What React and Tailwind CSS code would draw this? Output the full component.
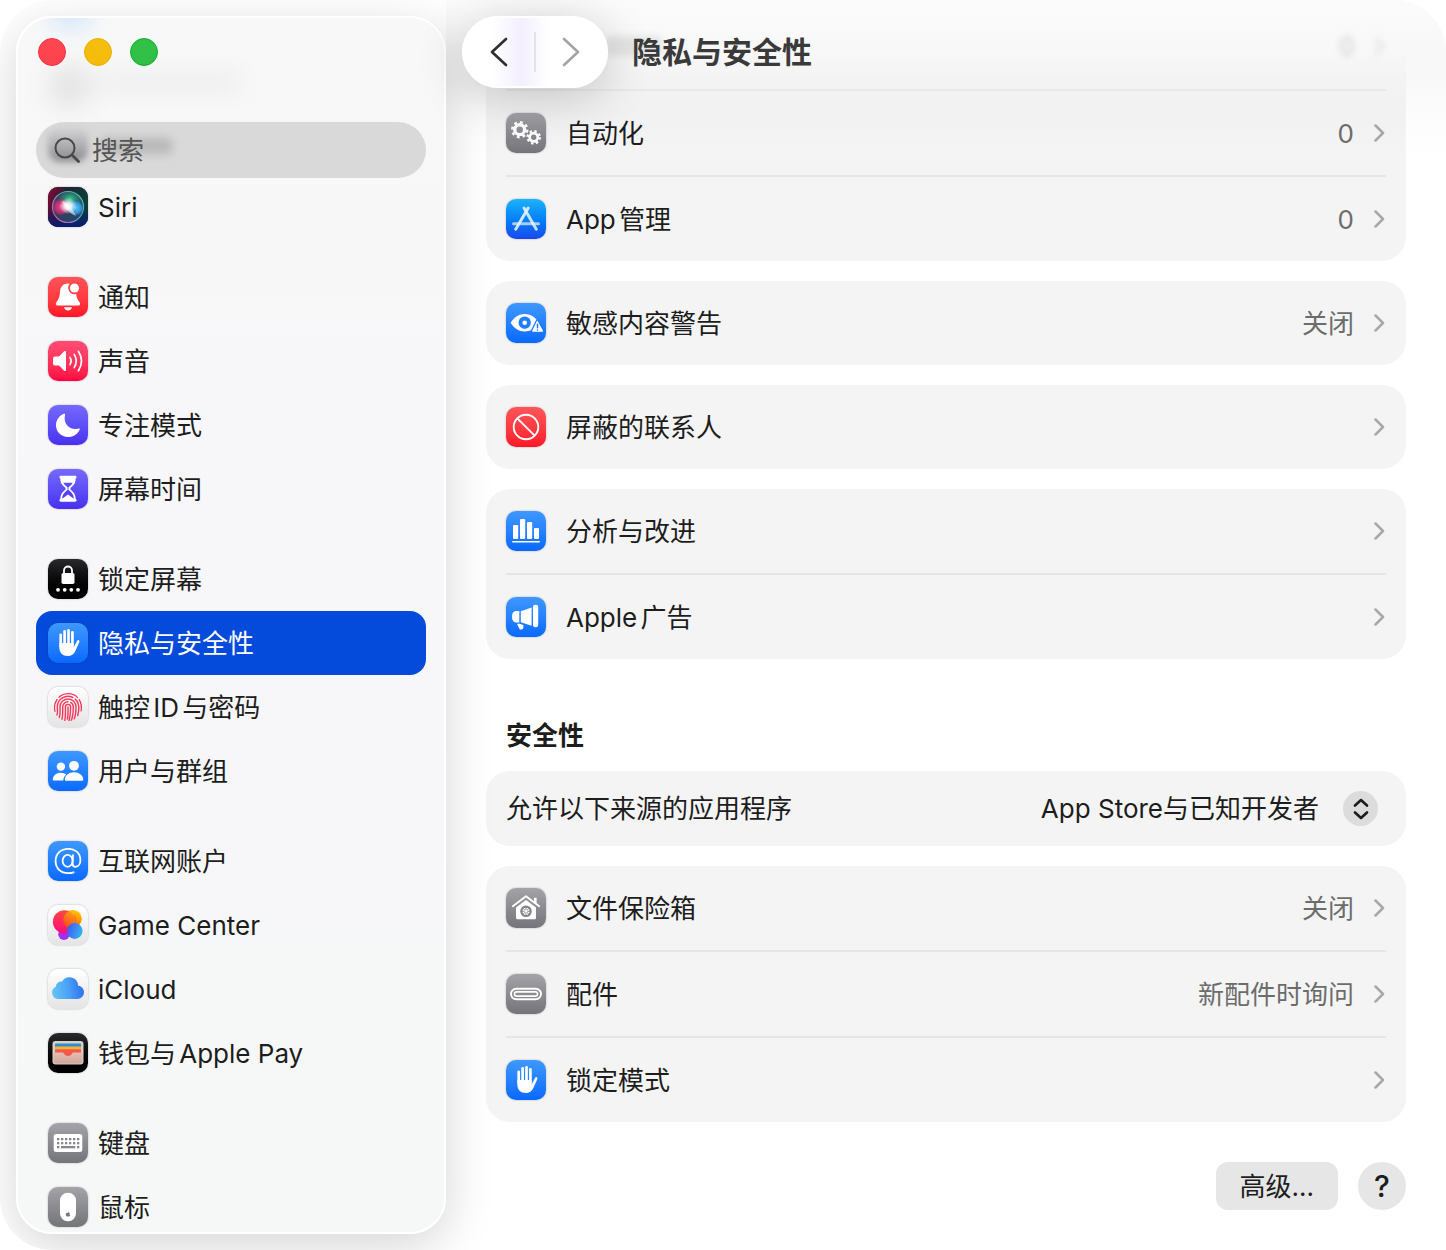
import React, { useState } from "react";
import { FaApple } from "react-icons/fa";

const tileColors = {
  gray: "bg-linear-to-b from-[#a4a3a8] to-[#75747a]",
  red: "bg-linear-to-b from-[#ff5459] to-[#ff1226]",
  pink: "bg-linear-to-b from-[#ff4c74] to-[#ff0043]",
  indigo: "bg-linear-to-b from-[#7668ff] to-[#492eee]",
  blue: "bg-linear-to-b from-[#3e98ff] to-[#0869ff]",
  sky: "bg-linear-to-b from-[#1fb2fc] to-[#1a46ee]",
  black: "bg-linear-to-b from-[#2a2a2c] to-[#000000]",
  white: "bg-linear-to-b from-[#ffffff] to-[#e4e4e4]",
};

function Tile({ color, children }) {
  return (
    <span
      className={`block size-10 shrink-0 overflow-hidden rounded-[10px] shadow-[0_0_2px_rgba(0,0,0,0.3)] ${tileColors[color]}`}
    >
      <svg viewBox="0 0 40 40" className="size-10" fill="#fff" aria-hidden="true">
        {children}
      </svg>
    </span>
  );
}

const SiriIcon = () => (
  <Tile color="black">
    <defs>
      <linearGradient id="siriBg" x1="0" y1="0" x2="1" y2="0.3">
        <stop offset="0" stopColor="#8a0638" />
        <stop offset="0.45" stopColor="#26202f" />
        <stop offset="1" stopColor="#0a4038" />
      </linearGradient>
      <linearGradient id="siriShade" x1="0" y1="0" x2="0" y2="1">
        <stop offset="0.5" stopColor="#0b1a66" stopOpacity="0" />
        <stop offset="1" stopColor="#0b1a7a" />
      </linearGradient>
      <radialGradient id="siriGlow">
        <stop offset="0" stopColor="#fff" />
        <stop offset="0.4" stopColor="#fff" stopOpacity="0.85" />
        <stop offset="1" stopColor="#fff" stopOpacity="0" />
      </radialGradient>
      <radialGradient id="siriPink">
        <stop offset="0" stopColor="#f2408c" />
        <stop offset="0.7" stopColor="#e02e78" stopOpacity="0.7" />
        <stop offset="1" stopColor="#d01e62" stopOpacity="0.2" />
      </radialGradient>
      <radialGradient id="siriBlue">
        <stop offset="0" stopColor="#4cc8ff" />
        <stop offset="0.7" stopColor="#3aa2ee" stopOpacity="0.8" />
        <stop offset="1" stopColor="#2b7fe0" stopOpacity="0.2" />
      </radialGradient>
      <radialGradient id="siriGreen">
        <stop offset="0" stopColor="#3ad0a0" />
        <stop offset="1" stopColor="#1b8a70" stopOpacity="0.3" />
      </radialGradient>
      <linearGradient id="siriRing" x1="0" y1="1" x2="1" y2="0">
        <stop offset="0" stopColor="#f04a8c" />
        <stop offset="0.5" stopColor="#5c9ad0" />
        <stop offset="1" stopColor="#3cc9a0" />
      </linearGradient>
    </defs>
    <rect width="40" height="40" fill="url(#siriBg)" />
    <rect width="40" height="40" fill="url(#siriShade)" />
    <circle cx="20" cy="20" r="15" fill="#3a5a70" opacity="0.6" />
    <ellipse cx="22" cy="12" rx="11" ry="8" fill="url(#siriGreen)" />
    <circle cx="13" cy="20" r="8.5" fill="url(#siriPink)" />
    <circle cx="28" cy="21" r="7.5" fill="url(#siriBlue)" />
    <ellipse cx="20" cy="19" rx="9" ry="8" fill="url(#siriGlow)" />
    <path d="M14 14c5 2 10 6 14 15-7-3-11-8-14-15z" fill="#fff" opacity="0.5" />
    <circle cx="20" cy="20" r="15.5" fill="none" stroke="url(#siriRing)" strokeWidth="1.2" />
  </Tile>
);

const BellIcon = () => (
  <Tile color="red">
    <path d="M20 6.500c-5 0-7.700 3.500-8 8.500-.3 5-1.200 7-3.500 10-1.200 1.500-.8 3.500 1.200 3.500h20.600c2 0 2.400-2 1.200-3.500-2.300-3-3.200-5-3.500-10-.3-5-3-8.500-8-8.500z" />
    <path d="M16 30.300h8c-.3 2-2 3.100-4 3.100s-3.700-1.100-4-3.100z" />
    <circle cx="26.500" cy="11" r="6.300" fill="#ff4248" />
    <circle cx="26.500" cy="11" r="4.600" />
  </Tile>
);

const SoundIcon = () => (
  <Tile color="pink">
    <path d="M5 17.500a2 2 0 0 1 2-2h4l5.200-5.200c.8-.8 1.800-.4 1.800.8v17.800c0 1.200-1 1.600-1.800.8L11 24.500H7a2 2 0 0 1-2-2z" />
    <g fill="none" stroke="#fff" strokeWidth="1.700" strokeLinecap="round">
      <path d="M22 16.500q2.200 3.500 0 7" />
      <path d="M26.200 13.400q4 6.600 0 13.200" />
      <path d="M30.400 10.300q6.200 9.700 0 19.400" />
    </g>
  </Tile>
);

const MoonIcon = () => (
  <Tile color="indigo">
    <path d="M16 8.800C11.200 10.700 8 15 8 20.300 8 27 13.300 32 20 32c5.300 0 9.700-2.900 11.700-7.300.3-.8-.2-1.300-1-1.100-8.500 2-15.800-4-13.700-13.800.2-.9-.3-1.300-1-1z" />
  </Tile>
);

const HourglassIcon = () => (
  <Tile color="indigo">
    <path d="M13 6.800h14c2 0 2 2.400.6 2.700.2 4.700-2 7-5.100 9.300v1.900c3.100 2.300 5.300 4.600 5.100 9.300 1.400.3 1.400 2.700-.6 2.700H13c-2 0-2-2.400-.6-2.700-.2-4.700 2-7 5.100-9.300v-1.900c-3.100-2.300-5.300-4.600-5.100-9.300C11 9.200 11 6.800 13 6.800z" />
    <path d="M15.300 13.700h9.400c-.8 1.900-2.500 3.100-4.200 4.500v2.600h-1v-2.600c-1.700-1.400-3.400-2.600-4.200-4.500z" fill="#5f4bf6" />
    <path d="M14.200 29.700c-.1-3.900 2.300-6.300 5.300-8.600h1c3 2.300 5.400 4.700 5.300 8.600L20 25.500z" fill="#5540f3" />
  </Tile>
);

const LockIcon = () => (
  <Tile color="black">
    <path d="M16 15v-3.500a4 4 0 0 1 8 0V15" fill="none" stroke="#fff" strokeWidth="1.800" />
    <rect x="13.500" y="14" width="13" height="11" rx="1.800" />
    {[10, 16.7, 23.3, 30].map((cx) => (
      <circle key={cx} cx={cx} cy="30.800" r="1.900" />
    ))}
  </Tile>
);

const HandIcon = () => (
  <Tile color="blue">
    <g stroke="#fff" strokeWidth="2.700" strokeLinecap="round">
      <path d="M12.700 11.800V23" />
      <path d="M16.600 8.300V22" />
      <path d="M20.500 7.300V22" />
      <path d="M24.400 9.300V22" />
    </g>
    <path d="M11.350 20h14.400v4.200l2.900-5.500c.6-1.200 1.300-1.900 2.200-1.500.9.400.7 1.400.3 2.300l-3.800 8.500c-1.600 3.300-4 5-7.500 5-5.200 0-8.500-3.200-8.500-8.500z" />
  </Tile>
);

const TouchIdIcon = () => (
  <Tile color="white">
    <clipPath id="touchId">
      <circle cx="20" cy="20" r="14.300" />
    </clipPath>
    <g clipPath="url(#touchId)" fill="none" stroke="#f8375b" strokeWidth="1.400" strokeLinecap="round">
      <path d="M6.900 24.500c-1.100-5-.1-9 2.100-12" />
      <path d="M11 10.200c5.500-5 14-4.500 18.600.300" />
      <path d="M31.300 12.700c2 3.300 2.500 6.800 1.900 11.300" />
      <path d="M8.700 28.500c1.500-3 .6-5.500.6-8.500a10.700 10.700 0 0 1 15.500-9.500" />
      <path d="M27.200 12.100c3.600 3 4 6.500 3.500 11.400l-1 5" />
      <path d="M10.800 31.500c1.700-3.500 1.300-7.500 1.200-11.500a8 8 0 0 1 16 0c0 4-.2 8-1.800 12" />
      <path d="M13.500 33.500c1.600-4 1.200-9 1.200-13.500 0-3 2.300-5.300 5.300-5.300" />
      <path d="M22.500 15.400c2 1 2.800 2.700 2.800 4.600 0 5-.3 9-2 13.500" />
      <path d="M16.600 34c1.200-4 .8-9.500.8-14a2.600 2.600 0 0 1 5.200 0c0 5-.2 9-1.600 14" />
      <path d="M20 20v6.500c0 2-.2 3.500-.6 5.500" />
    </g>
  </Tile>
);

const UsersIcon = () => (
  <Tile color="blue">
    <circle cx="12.900" cy="15.600" r="4.200" />
    <circle cx="26" cy="14.800" r="4.900" />
    <path d="M12.900 21.800c2.200 0 4 .7 5.300 1.800-1.800 1.600-2.900 3.600-2.900 6H6c-1 0-1.400-.5-1.300-1.300.4-3.800 3.700-6.500 8.200-6.500z" />
    <path d="M26 21.300c5.200 0 8.700 3 9.300 6.900.1.900-.4 1.500-1.300 1.500H18c-.9 0-1.400-.6-1.300-1.500.6-3.900 4.100-6.900 9.300-6.900z" />
  </Tile>
);

const InternetIcon = () => (
  <Tile color="blue">
    <g fill="none" stroke="#fff" strokeWidth="1.800" strokeLinecap="round" strokeLinejoin="round">
      <ellipse cx="19.600" cy="19.800" rx="5" ry="6" />
      <path d="M25 14.200l-.4 8.300c0 2.200 1 3.300 2.900 3.300 2.900 0 4.900-3 4.900-6.800 0-6.600-5-11.200-12.200-11.200-7.400 0-12.600 5-12.600 12.300s5 12.100 12.700 12.100c2 0 3.900-.3 5.300-.9" />
    </g>
  </Tile>
);

const GameCenterIcon = () => (
  <Tile color="white">
    <defs>
      <linearGradient id="gcRed" x1="0.5" y1="0" x2="0.4" y2="1">
        <stop offset="0" stopColor="#ff4a3d" />
        <stop offset="1" stopColor="#ff0a7c" />
      </linearGradient>
      <linearGradient id="gcYellow" x1="0.7" y1="0" x2="0.2" y2="1">
        <stop offset="0" stopColor="#ffc800" />
        <stop offset="1" stopColor="#ff4a00" />
      </linearGradient>
      <linearGradient id="gcBlue" x1="0" y1="0.3" x2="1" y2="0.6">
        <stop offset="0" stopColor="#4655f0" />
        <stop offset="1" stopColor="#2fb8f5" />
      </linearGradient>
    </defs>
    <circle cx="16" cy="29.300" r="5.700" fill="#a32df0" />
    <circle cx="25" cy="13.800" r="8.800" fill="url(#gcYellow)" />
    <circle cx="16.500" cy="16.800" r="11.600" fill="url(#gcRed)" />
    <path d="M26.300 11.200a11.600 11.600 0 0 1-1.600 13.800 8.800 8.800 0 0 1 1.300-19.900" fill="url(#gcYellow)" opacity="0.700" />
    <circle cx="26.700" cy="26" r="7.900" fill="url(#gcBlue)" />
  </Tile>
);

const CloudIcon = () => (
  <Tile color="white">
    <defs>
      <linearGradient id="cloud" x1="0" y1="0.6" x2="1" y2="0.5">
        <stop offset="0" stopColor="#63c6f3" />
        <stop offset="0.5" stopColor="#4aa2f5" />
        <stop offset="1" stopColor="#2d6fee" />
      </linearGradient>
    </defs>
    <path
      d="M10.500 30A6.400 6.400 0 0 1 7.800 17.800 5.600 5.600 0 0 1 14 12.500 8.600 8.600 0 0 1 30 16.500a6.800 6.800 0 0 1 0 13.500z"
      fill="url(#cloud)"
    />
  </Tile>
);

const WalletIcon = () => (
  <Tile color="black">
    <defs>
      <linearGradient id="walletFront" x1="0" y1="0" x2="0" y2="1">
        <stop offset="0" stopColor="#e6bdb2" />
        <stop offset="1" stopColor="#cfa79b" />
      </linearGradient>
    </defs>
    <rect x="4.500" y="8" width="31" height="23.500" rx="3" fill="#d8cfc8" />
    <rect x="7" y="10.500" width="26" height="5" rx="1" fill="#2c8fd6" />
    <rect x="7" y="13.500" width="26" height="5" rx="1" fill="#f8b42e" />
    <rect x="7" y="16.300" width="26" height="9" rx="1" fill="#f4574b" />
    <path
      d="M5.500 19.500h9c1.500 0 1.800 3.500 5.500 3.500s4-3.500 5.500-3.500h9V28a2.500 2.500 0 0 1-2.500 2.500H8A2.500 2.500 0 0 1 5.500 28z"
      fill="url(#walletFront)"
    />
  </Tile>
);

const KeyboardIcon = () => (
  <Tile color="gray">
    <rect x="5.700" y="11" width="28.600" height="18" rx="2.500" />
    <g fill="#87868c">
      {[15, 19].map((y) =>
        [9, 13, 17, 21, 25, 29].map((x) => (
          <rect key={`${x}-${y}`} x={x} y={y} width="2.300" height="2.300" />
        ))
      )}
      <rect x="9" y="23" width="2.300" height="2.300" />
      <rect x="13" y="23" width="14.300" height="2.300" />
      <rect x="29" y="23" width="2.300" height="2.300" />
    </g>
  </Tile>
);

const MouseIcon = () => (
  <Tile color="gray">
    <rect x="12" y="5.700" width="16" height="28.600" rx="7.800" />
    <FaApple x="17" y="24" size={6} color="#77767c" />
  </Tile>
);

const GearsIcon = () => (
  <Tile color="gray">
    <g fill="none" stroke="#fff">
      <circle cx="13.700" cy="16.700" r="4.900" strokeWidth="3.400" />
      <circle cx="13.700" cy="16.700" r="7.300" strokeWidth="2.800" strokeDasharray="2.800 2.933" />
      <circle cx="27.700" cy="24.300" r="4.100" strokeWidth="2.800" />
      <circle cx="27.700" cy="24.300" r="6.100" strokeWidth="2.400" strokeDasharray="2.300 2.490" />
    </g>
  </Tile>
);

const AppStoreIcon = () => (
  <Tile color="sky">
    <g fill="none" stroke="#e4f3ff" strokeWidth="3" strokeLinecap="round">
      <path d="M7.500 24.700h25" opacity="0.700" />
      <path d="M18 9l12.300 21.300" opacity="0.850" />
      <path d="M22.200 9L9.700 30.300" opacity="0.900" />
    </g>
  </Tile>
);

const SensitiveIcon = () => (
  <Tile color="blue">
    <path d="M4.700 19.700C8 14 13 11 18.700 11s10.700 3 14 8.700c-3.300 5.700-8.300 8.700-14 8.700S8 25.400 4.700 19.700z" />
    <circle cx="18.700" cy="19.700" r="6.200" fill="#1f7fff" />
    <circle cx="18.700" cy="19.700" r="2.300" />
    <path
      d="M31.800 18.200l5 9c.5.900 0 1.600-.9 1.600h-8.600c-.9 0-1.400-.7-.9-1.600l4.400-9c.3-.6.700-.6 1 0z"
      stroke="#1a7aff"
      strokeWidth="2.600"
      strokeLinejoin="round"
      paintOrder="stroke"
    />
    <path d="M31.500 21.300v3.600" stroke="#1675ff" strokeWidth="1.400" strokeLinecap="round" />
    <circle cx="31.500" cy="27" r="0.800" fill="#1675ff" />
  </Tile>
);

const BlockedIcon = () => (
  <Tile color="red">
    <g fill="none" stroke="#fff" strokeWidth="1.900">
      <circle cx="20" cy="20" r="12.300" />
      <path d="M11.300 11.300l17.400 17.400" />
    </g>
  </Tile>
);

const ChartIcon = () => (
  <Tile color="blue">
    <rect x="7" y="14" width="5.200" height="14" rx="1" />
    <rect x="14" y="8" width="5.200" height="20" rx="1" />
    <rect x="21" y="11" width="5.200" height="17" rx="1" />
    <rect x="28" y="17" width="5" height="11" rx="1" />
    <rect x="6" y="30" width="28" height="1.600" rx="0.800" />
  </Tile>
);

const MegaphoneIcon = () => (
  <Tile color="blue">
    <rect x="27" y="7.700" width="5.200" height="22.600" rx="2.200" />
    <path d="M14.800 14.300l10.800-3.800v18.200l-10.800-3.500z" />
    <path d="M13.300 14v11.500H10c-2.500 0-4-2.300-4-5.700S7.500 14 10 14z" />
    <path d="M11 26.700h2.500l3.900 1.200v2.700c0 1.300-.9 2-2.200 2s-1.700-.6-2.200-1.600z" />
  </Tile>
);

const VaultIcon = () => (
  <Tile color="gray">
    <path d="M6.800 18.200L20 8.200l13.200 10" fill="none" stroke="#fff" strokeWidth="1.900" strokeLinecap="round" strokeLinejoin="round" />
    <path d="M28 9.800h2.600v6.400L28 14.200z" />
    <path d="M20 12l10 7.600v9.900c0 1.200-.6 1.800-1.800 1.800H11.800c-1.200 0-1.800-.6-1.800-1.800v-9.900z" />
    <g fill="none" stroke="#828187">
      <circle cx="20" cy="23.300" r="4.700" strokeWidth="2.200" />
      <path d="M20 18.500v9.600M15.200 23.300h9.600M16.600 19.900l6.800 6.800M23.400 19.900l-6.800 6.800" strokeWidth="0.900" />
    </g>
    <circle cx="20" cy="23.300" r="1.300" />
  </Tile>
);

const AccessoryIcon = () => (
  <Tile color="gray">
    <g fill="none" stroke="#fff" strokeWidth="1.900">
      <rect x="5" y="14.700" width="30" height="10.600" rx="5.300" />
      <rect x="8.500" y="17.900" width="23" height="4.200" rx="2.100" strokeWidth="1.700" />
    </g>
  </Tile>
);

const sidebarGroups = [
  [{ label: "Siri", Icon: SiriIcon }],
  [
    { label: "通知", Icon: BellIcon },
    { label: "声音", Icon: SoundIcon },
    { label: "专注模式", Icon: MoonIcon },
    { label: "屏幕时间", Icon: HourglassIcon },
  ],
  [
    { label: "锁定屏幕", Icon: LockIcon },
    { label: "隐私与安全性", Icon: HandIcon },
    { label: "触控ID与密码", Icon: TouchIdIcon },
    { label: "用户与群组", Icon: UsersIcon },
  ],
  [
    { label: "互联网账户", Icon: InternetIcon },
    { label: "Game Center", Icon: GameCenterIcon },
    { label: "iCloud", Icon: CloudIcon },
    { label: "钱包与Apple Pay", Icon: WalletIcon },
  ],
  [
    { label: "键盘", Icon: KeyboardIcon },
    { label: "鼠标", Icon: MouseIcon },
  ],
];

const appRows = [
  { label: "自动化", value: "0", Icon: GearsIcon },
  { label: "App管理", value: "0", Icon: AppStoreIcon },
];

const privacyGroups = [
  [{ label: "敏感内容警告", value: "关闭", Icon: SensitiveIcon }],
  [{ label: "屏蔽的联系人", Icon: BlockedIcon }],
  [
    { label: "分析与改进", Icon: ChartIcon },
    { label: "Apple广告", Icon: MegaphoneIcon },
  ],
];

const securityRows = [
  { label: "文件保险箱", value: "关闭", Icon: VaultIcon },
  { label: "配件", value: "新配件时询问", Icon: AccessoryIcon },
  { label: "锁定模式", Icon: HandIcon },
];

function Chevron() {
  return (
    <svg viewBox="0 0 12 20" className="h-5 w-3 shrink-0" aria-hidden="true">
      <path d="M1.500 2.500L9 10l-7.500 7.500" fill="none" stroke="#a8a8a8" strokeWidth="2.500" strokeLinecap="round" strokeLinejoin="round" />
    </svg>
  );
}

function Row({ label, value, Icon }) {
  return (
    <button type="button" className="flex h-[84px] w-full items-center gap-5 text-left">
      <Icon />
      <span className="flex-1 pt-0.5">{label}</span>
      {value && <span className="pt-0.5 text-[#6c6c6c]">{value}</span>}
      <Chevron />
    </button>
  );
}

function Rows({ rows }) {
  return (
    <ul className="divide-y-2 divide-[#e5e5e5]">
      {rows.map((row) => (
        <li key={row.label}>
          <Row {...row} />
        </li>
      ))}
    </ul>
  );
}

function Card({ rows }) {
  return (
    <div className="rounded-3xl bg-[#f4f4f4] px-5">
      <Rows rows={rows} />
    </div>
  );
}

function Sidebar({ selected, onSelect }) {
  return (
    <aside className="relative z-20 m-4 flex w-[430px] shrink-0 flex-col overflow-hidden rounded-[36px] border-2 border-white bg-linear-to-b from-[#f8f8f8] via-[#f7f6f9] to-[#f6f8f7] shadow-[0_12px_48px_rgba(0,0,0,0.17)]">
      {/* Lo que ya pasó por debajo de la cabecera */}
      <div className="absolute top-12 left-8 h-10 w-10 rounded-xl bg-black/8 blur-md" />
      <div className="absolute top-14 left-20 h-4 w-36 rounded-xl bg-black/5 blur-md" />
      <div className="absolute -top-6 left-8 h-8 w-10 rounded-xl bg-blue-300/40 blur-md" />

      <header className="flex flex-col px-[18px]">
        <div className="flex gap-[18px] px-0.5 pt-5">
          <button type="button" aria-label="关闭窗口" className="size-7 rounded-full border border-[#f5303c] bg-[#ff454f]" />
          <button type="button" aria-label="最小化" className="size-7 rounded-full border border-[#edb000] bg-[#f6be0c]" />
          <button type="button" aria-label="缩放" className="size-7 rounded-full border border-[#16ad30] bg-[#31c048]" />
        </div>
        <div className="relative mt-14 flex h-14 items-center gap-3 overflow-hidden rounded-full bg-[#d9d9d9] pl-[18px]">
          <div className="absolute top-1 left-3 h-9 w-10 rounded-xl bg-linear-to-b from-transparent to-[#8a898f] blur-[3px]" />
          <div className="absolute top-4 left-16 h-4 w-[72px] rounded bg-black/15 blur-[5px]" />
          <svg viewBox="0 0 26 26" className="relative size-[26px] shrink-0" fill="none" stroke="#484848" aria-hidden="true">
            <circle cx="11" cy="11" r="9.500" strokeWidth="2" />
            <path d="M18 18l6.500 6.500" strokeWidth="2.800" strokeLinecap="round" />
          </svg>
          <input
            type="search"
            aria-label="搜索"
            placeholder="搜索"
            className="relative w-full min-w-0 bg-transparent pt-0.5 outline-none placeholder:text-[#555555]"
          />
        </div>
      </header>

      <nav className="-mt-[3px] flex min-h-0 flex-1 flex-col gap-[26px] overflow-y-auto px-[18px] [scrollbar-width:none]">
        {sidebarGroups.map((group) => (
          <ul key={group[0].label}>
            {group.map(({ label, Icon }) => (
              <li key={label}>
                <a
                  href="#"
                  onClick={() => onSelect(label)}
                  className={`flex h-16 items-center gap-2.5 rounded-2xl px-3 ${
                    selected === label ? "bg-[#054bdb] text-white" : ""
                  }`}
                >
                  <Icon />
                  <span className="pt-0.5">{label}</span>
                </a>
              </li>
            ))}
          </ul>
        ))}
      </nav>
    </aside>
  );
}

export default function App() {
  const [selected, setSelected] = useState("隐私与安全性");
  const [source, setSource] = useState("known");

  return (
    <div className="flex h-screen overflow-hidden rounded-[52px] bg-white font-['Inter','Noto_Sans_CJK_SC',sans-serif] text-[26px] leading-8 text-[#1d1d1d] [text-autospace:normal]">
      <Sidebar selected={selected} onSelect={setSelected} />

      <div className="relative min-w-0 flex-1">
        {/* Barra superior */}
        <header className="absolute inset-x-0 top-0 z-30 flex items-center gap-6 pt-4">
          <div className="flex h-[72px] w-[146px] items-center justify-between rounded-full border-2 border-white bg-linear-to-r from-white from-20% via-[#f3effe] via-40% to-white to-60% px-[26px] shadow-[0_8px_48px_rgba(0,0,0,0.2)]">
            <button type="button" aria-label="返回">
              <svg viewBox="0 0 18 30" className="h-[30px] w-[18px]" fill="none" stroke="#303030" strokeWidth="2.700" strokeLinecap="round" strokeLinejoin="round" aria-hidden="true">
                <path d="M16 2L2 15l14 13" />
              </svg>
            </button>
            <span className="h-10 w-0.5 bg-[#e4e2ea]" />
            <button type="button" aria-label="前进">
              <svg viewBox="0 0 18 30" className="h-[30px] w-[18px]" fill="none" stroke="#a5a5a5" strokeWidth="2.700" strokeLinecap="round" strokeLinejoin="round" aria-hidden="true">
                <path d="M2 2l14 13L2 28" />
              </svg>
            </button>
          </div>
          <h1 className="text-[30px] leading-10 font-bold text-[#3a3a3a]">隐私与安全性</h1>
        </header>
        <div className="pointer-events-none absolute -left-4 right-0 top-0 z-10 h-28 bg-linear-to-b from-[#fbfbfb] from-45% to-transparent to-100%" />
        <div className="pointer-events-none absolute -left-4 right-0 top-0 z-10 h-40 bg-linear-to-b from-transparent via-black/2 to-transparent" />

        <main className="h-full overflow-y-auto px-10 pb-10 pl-6 [scrollbar-width:none]">
          <div className="rounded-b-3xl bg-[#f4f4f4] px-5 pt-[89px]">
            <div className="border-t-2 border-[#e5e5e5]">
              <Rows rows={appRows} />
            </div>
          </div>

          <div className="mt-5 flex flex-col gap-5">
            {privacyGroups.map((rows) => (
              <Card key={rows[0].label} rows={rows} />
            ))}
          </div>

          <h2 className="mt-[60px] mb-5 px-5 pt-0.5 leading-[30px] font-bold">安全性</h2>

          <div className="flex flex-col gap-5">
            <div className="flex h-[75px] items-center rounded-3xl bg-[#f4f4f4] pr-7 pl-5">
              <label htmlFor="source" className="flex-1">
                允许以下来源的应用程序
              </label>
              <select
                id="source"
                value={source}
                onChange={(e) => setSource(e.target.value)}
                className="field-sizing-content appearance-none bg-transparent text-right outline-none [text-autospace:normal]"
              >
                <option value="known">App Store与已知开发者</option>
                <option value="store">App Store</option>
              </select>
              <span className="ml-6 flex size-[35px] items-center justify-center rounded-full bg-[#dcdcdc]">
                <svg viewBox="0 0 16 22" className="h-[22px] w-4" fill="none" stroke="#1d1d1d" strokeWidth="2.600" strokeLinecap="round" strokeLinejoin="round" aria-hidden="true">
                  <path d="M2 7.500l6-5.500 6 5.500M2 14.500l6 5.500 6-5.500" />
                </svg>
              </span>
            </div>
            <Card rows={securityRows} />
          </div>

          <div className="mt-10 flex justify-end gap-5">
            <button type="button" className="h-12 rounded-xl bg-[#e6e6e6] px-6 pt-0.5">
              高级...
            </button>
            <button type="button" aria-label="帮助" className="size-12 rounded-full bg-[#e6e6e6] text-[30px] font-medium">
              ?
            </button>
          </div>
        </main>

        {/* Restos difuminados de la fila que queda bajo la barra */}
        <div className="pointer-events-none absolute inset-x-0 top-9 z-20 flex items-center gap-5 pr-[60px] pl-36 blur-[3px]">
          <div className="h-5 w-14 rounded bg-black/8" />
          <div className="ml-auto h-5 w-3.5 rounded-full border-4 border-black/10" />
          <div className="opacity-30">
            <Chevron />
          </div>
        </div>
      </div>
    </div>
  );
}
